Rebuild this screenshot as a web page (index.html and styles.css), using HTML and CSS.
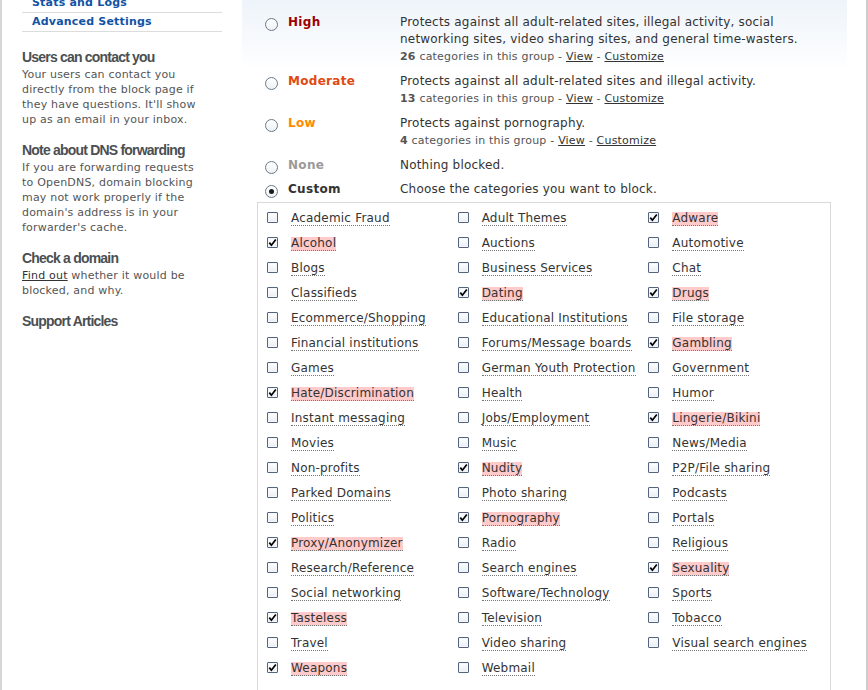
FILE: index.html
```html
<!DOCTYPE html>
<html>
<head>
<meta charset="utf-8">
<title>Content filtering</title>
<link rel="stylesheet" href="styles.css">
</head>
<body>
<div class="page">
  <aside class="sidebar">
    <ul class="nav">
      <li><a href="#">Stats and Logs</a></li>
      <li><a href="#">Advanced Settings</a></li>
    </ul>
    <section class="note first">
      <h3>Users can contact you</h3>
      <p>Your users can contact you directly from the block page if they have questions. It'll show up as an email in your inbox.</p>
    </section>
    <section class="note">
      <h3>Note about DNS forwarding</h3>
      <p>If you are forwarding requests to OpenDNS, domain blocking may not work properly if the domain's address is in your forwarder's cache.</p>
    </section>
    <section class="note">
      <h3>Check a domain</h3>
      <p><a href="#" class="plain-link">Find out</a> whether it would be blocked, and why.</p>
    </section>
    <section class="note">
      <h3>Support Articles</h3>
    </section>
  </aside>

  <main class="main">
    <div class="levels">
      <div class="level">
        <span class="radio"></span>
        <span class="name high">High</span>
        <div class="desc">
          <div>Protects against all adult-related sites, illegal activity, social networking sites, video sharing sites, and general time-wasters.</div>
          <div class="meta"><b>26</b> categories in this group - <a href="#">View</a> - <a href="#">Customize</a></div>
        </div>
      </div>
      <div class="level">
        <span class="radio"></span>
        <span class="name moderate">Moderate</span>
        <div class="desc">
          <div>Protects against all adult-related sites and illegal activity.</div>
          <div class="meta"><b>13</b> categories in this group - <a href="#">View</a> - <a href="#">Customize</a></div>
        </div>
      </div>
      <div class="level">
        <span class="radio"></span>
        <span class="name low">Low</span>
        <div class="desc">
          <div>Protects against pornography.</div>
          <div class="meta"><b>4</b> categories in this group - <a href="#">View</a> - <a href="#">Customize</a></div>
        </div>
      </div>
      <div class="level">
        <span class="radio"></span>
        <span class="name none">None</span>
        <div class="desc">
          <div>Nothing blocked.</div>
        </div>
      </div>
      <div class="level last">
        <span class="radio checked"></span>
        <span class="name custom">Custom</span>
        <div class="desc">
          <div>Choose the categories you want to block.</div>
        </div>
      </div>
    </div>

    <div class="cats">
      <div class="cat"><span class="cb"></span><span class="lbl">Academic Fraud</span></div>
      <div class="cat"><span class="cb"></span><span class="lbl">Adult Themes</span></div>
      <div class="cat"><span class="cb"><svg viewBox="0 0 9 9" width="9" height="9"><path d="M1.3 4.6 L3.4 7.2 L7.8 1.4" fill="none" stroke="#000" stroke-width="1.7"/></svg></span><span class="lbl on">Adware</span></div>

      <div class="cat"><span class="cb"><svg viewBox="0 0 9 9" width="9" height="9"><path d="M1.3 4.6 L3.4 7.2 L7.8 1.4" fill="none" stroke="#000" stroke-width="1.7"/></svg></span><span class="lbl on">Alcohol</span></div>
      <div class="cat"><span class="cb"></span><span class="lbl">Auctions</span></div>
      <div class="cat"><span class="cb"></span><span class="lbl">Automotive</span></div>

      <div class="cat"><span class="cb"></span><span class="lbl">Blogs</span></div>
      <div class="cat"><span class="cb"></span><span class="lbl">Business Services</span></div>
      <div class="cat"><span class="cb"></span><span class="lbl">Chat</span></div>

      <div class="cat"><span class="cb"></span><span class="lbl">Classifieds</span></div>
      <div class="cat"><span class="cb"><svg viewBox="0 0 9 9" width="9" height="9"><path d="M1.3 4.6 L3.4 7.2 L7.8 1.4" fill="none" stroke="#000" stroke-width="1.7"/></svg></span><span class="lbl on">Dating</span></div>
      <div class="cat"><span class="cb"><svg viewBox="0 0 9 9" width="9" height="9"><path d="M1.3 4.6 L3.4 7.2 L7.8 1.4" fill="none" stroke="#000" stroke-width="1.7"/></svg></span><span class="lbl on">Drugs</span></div>

      <div class="cat"><span class="cb"></span><span class="lbl">Ecommerce/Shopping</span></div>
      <div class="cat"><span class="cb"></span><span class="lbl">Educational Institutions</span></div>
      <div class="cat"><span class="cb"></span><span class="lbl">File storage</span></div>

      <div class="cat"><span class="cb"></span><span class="lbl">Financial institutions</span></div>
      <div class="cat"><span class="cb"></span><span class="lbl">Forums/Message boards</span></div>
      <div class="cat"><span class="cb"><svg viewBox="0 0 9 9" width="9" height="9"><path d="M1.3 4.6 L3.4 7.2 L7.8 1.4" fill="none" stroke="#000" stroke-width="1.7"/></svg></span><span class="lbl on">Gambling</span></div>

      <div class="cat"><span class="cb"></span><span class="lbl">Games</span></div>
      <div class="cat"><span class="cb"></span><span class="lbl">German Youth Protection</span></div>
      <div class="cat"><span class="cb"></span><span class="lbl">Government</span></div>

      <div class="cat"><span class="cb"><svg viewBox="0 0 9 9" width="9" height="9"><path d="M1.3 4.6 L3.4 7.2 L7.8 1.4" fill="none" stroke="#000" stroke-width="1.7"/></svg></span><span class="lbl on">Hate/Discrimination</span></div>
      <div class="cat"><span class="cb"></span><span class="lbl">Health</span></div>
      <div class="cat"><span class="cb"></span><span class="lbl">Humor</span></div>

      <div class="cat"><span class="cb"></span><span class="lbl">Instant messaging</span></div>
      <div class="cat"><span class="cb"></span><span class="lbl">Jobs/Employment</span></div>
      <div class="cat"><span class="cb"><svg viewBox="0 0 9 9" width="9" height="9"><path d="M1.3 4.6 L3.4 7.2 L7.8 1.4" fill="none" stroke="#000" stroke-width="1.7"/></svg></span><span class="lbl on">Lingerie/Bikini</span></div>

      <div class="cat"><span class="cb"></span><span class="lbl">Movies</span></div>
      <div class="cat"><span class="cb"></span><span class="lbl">Music</span></div>
      <div class="cat"><span class="cb"></span><span class="lbl">News/Media</span></div>

      <div class="cat"><span class="cb"></span><span class="lbl">Non-profits</span></div>
      <div class="cat"><span class="cb"><svg viewBox="0 0 9 9" width="9" height="9"><path d="M1.3 4.6 L3.4 7.2 L7.8 1.4" fill="none" stroke="#000" stroke-width="1.7"/></svg></span><span class="lbl on">Nudity</span></div>
      <div class="cat"><span class="cb"></span><span class="lbl">P2P/File sharing</span></div>

      <div class="cat"><span class="cb"></span><span class="lbl">Parked Domains</span></div>
      <div class="cat"><span class="cb"></span><span class="lbl">Photo sharing</span></div>
      <div class="cat"><span class="cb"></span><span class="lbl">Podcasts</span></div>

      <div class="cat"><span class="cb"></span><span class="lbl">Politics</span></div>
      <div class="cat"><span class="cb"><svg viewBox="0 0 9 9" width="9" height="9"><path d="M1.3 4.6 L3.4 7.2 L7.8 1.4" fill="none" stroke="#000" stroke-width="1.7"/></svg></span><span class="lbl on">Pornography</span></div>
      <div class="cat"><span class="cb"></span><span class="lbl">Portals</span></div>

      <div class="cat"><span class="cb"><svg viewBox="0 0 9 9" width="9" height="9"><path d="M1.3 4.6 L3.4 7.2 L7.8 1.4" fill="none" stroke="#000" stroke-width="1.7"/></svg></span><span class="lbl on">Proxy/Anonymizer</span></div>
      <div class="cat"><span class="cb"></span><span class="lbl">Radio</span></div>
      <div class="cat"><span class="cb"></span><span class="lbl">Religious</span></div>

      <div class="cat"><span class="cb"></span><span class="lbl">Research/Reference</span></div>
      <div class="cat"><span class="cb"></span><span class="lbl">Search engines</span></div>
      <div class="cat"><span class="cb"><svg viewBox="0 0 9 9" width="9" height="9"><path d="M1.3 4.6 L3.4 7.2 L7.8 1.4" fill="none" stroke="#000" stroke-width="1.7"/></svg></span><span class="lbl on">Sexuality</span></div>

      <div class="cat"><span class="cb"></span><span class="lbl">Social networking</span></div>
      <div class="cat"><span class="cb"></span><span class="lbl">Software/Technology</span></div>
      <div class="cat"><span class="cb"></span><span class="lbl">Sports</span></div>

      <div class="cat"><span class="cb"><svg viewBox="0 0 9 9" width="9" height="9"><path d="M1.3 4.6 L3.4 7.2 L7.8 1.4" fill="none" stroke="#000" stroke-width="1.7"/></svg></span><span class="lbl on">Tasteless</span></div>
      <div class="cat"><span class="cb"></span><span class="lbl">Television</span></div>
      <div class="cat"><span class="cb"></span><span class="lbl">Tobacco</span></div>

      <div class="cat"><span class="cb"></span><span class="lbl">Travel</span></div>
      <div class="cat"><span class="cb"></span><span class="lbl">Video sharing</span></div>
      <div class="cat"><span class="cb"></span><span class="lbl">Visual search engines</span></div>

      <div class="cat"><span class="cb"><svg viewBox="0 0 9 9" width="9" height="9"><path d="M1.3 4.6 L3.4 7.2 L7.8 1.4" fill="none" stroke="#000" stroke-width="1.7"/></svg></span><span class="lbl on">Weapons</span></div>
      <div class="cat"><span class="cb"></span><span class="lbl">Webmail</span></div>
      <div class="cat"></div>
    </div>
  </main>
</div>
</body>
</html>
```

FILE: styles.css
```css
html, body {
  margin: 0;
  padding: 0;
  background: #fff;
}

body {
  font-family: "DejaVu Sans", sans-serif;
  color: #333;
}

.page {
  display: flex;
  width: 868px;
  height: 690px;
  overflow: hidden;
  box-sizing: border-box;
  border-left: 2px solid #d6d6d6;
  border-right: 2px solid #cdcdcd;
}

/* ---------- sidebar ---------- */
.sidebar {
  width: 240px;
  flex: none;
  padding-left: 20px;
  box-sizing: border-box;
}

.nav {
  list-style: none;
  margin: -6px 0 0;
  padding: 0;
  width: 200px;
  font-size: 11px;
}

.nav li {
  border-bottom: 1px solid #dcdcdc;
  font-size: 11px;
  line-height: 18px;
  padding-left: 10px;
}

.nav a {
  color: #1253a6;
  font-weight: bold;
  font-size: 11px;
  letter-spacing: 0.2px;
  text-decoration: none;
}

.note {
  margin-top: 14px;
  width: 184px;
}

.note.first {
  margin-top: 16px;
}

.note h3 {
  margin: 0;
  font-family: "Liberation Sans", Arial, sans-serif;
  font-weight: bold;
  font-size: 14px;
  line-height: 19px;
  letter-spacing: -0.8px;
  color: #4b4f52;
}

.note p {
  margin: 0;
  font-size: 11px;
  line-height: 15px;
  letter-spacing: 0.2px;
  color: #555;
}

.plain-link {
  color: #333;
  text-decoration: underline;
}

/* ---------- main ---------- */
.main {
  width: 605px;
  flex: none;
  box-sizing: border-box;
  padding: 14px 16px 0 15px;
  background: linear-gradient(#eef4fa 0, #f7fafd 40px, #fff 70px);
}

.levels {
  padding-left: 8px;
}

.level {
  display: grid;
  grid-template-columns: 23px 112px 1fr;
  margin-bottom: 7px;
  font-size: 12px;
  line-height: 17px;
  letter-spacing: 0.2px;
  color: #333;
}

.level.last {
  margin-bottom: 4px;
}

.radio {
  width: 13px;
  height: 13px;
  margin-top: 4px;
  box-sizing: border-box;
  border: 1.5px solid #697989;
  border-radius: 50%;
  background: linear-gradient(#fff, #eef1f4);
  display: flex;
  align-items: center;
  justify-content: center;
}

.radio.checked::after {
  content: "";
  width: 5px;
  height: 5px;
  border-radius: 50%;
  background: #1a1a1a;
}

.name {
  font-weight: bold;
  letter-spacing: 0.3px;
}

.name.high { color: #9c0000; }
.name.moderate { color: #df4a12; }
.name.low { color: #ff8a00; }
.name.none { color: #9a9a9a; }
.name.custom { color: #333; }

.meta {
  font-size: 11px;
  line-height: 18px;
  color: #555;
}

.meta b {
  color: #555;
}

.meta a {
  color: #333;
  text-decoration: underline;
}

/* ---------- category grid ---------- */
.cats {
  border: 1px solid #dadada;
  display: grid;
  grid-template-columns: repeat(3, 1fr);
  padding: 3px 0 15px;
}

.cat {
  height: 25px;
  display: flex;
  align-items: center;
  padding-left: 9px;
}

.cb {
  width: 11px;
  height: 11px;
  flex: none;
  box-sizing: border-box;
  border: 1px solid #55647e;
  border-radius: 1px;
  background: linear-gradient(#fff, #e9edf3);
  box-shadow: inset 0 0 0 1px #f4f6f9;
  margin-right: 13px;
  margin-bottom: 2px;
  display: flex;
  align-items: center;
  justify-content: center;
}

.cb svg {
  display: block;
}

.lbl {
  display: inline-block;
  font-size: 12px;
  line-height: 13px;
  letter-spacing: 0.2px;
  color: #333;
  border-bottom: 1px dotted #777;
  white-space: nowrap;
}

.lbl.on {
  background: #ffcaca;
}
```
